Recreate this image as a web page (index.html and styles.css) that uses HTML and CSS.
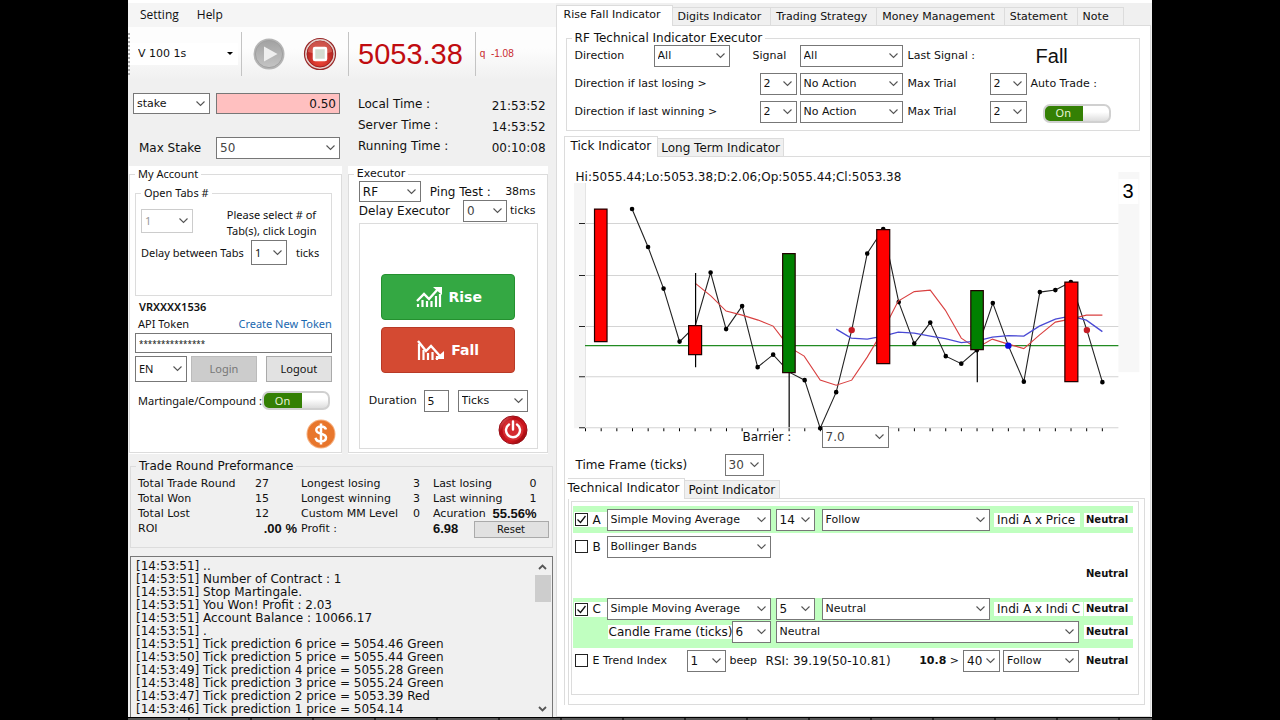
FILE: index.html
```html
<!DOCTYPE html>
<html lang="en">
<head>
<meta charset="utf-8">
<title>Trading Robot</title>
<link rel="stylesheet" href="styles.css">
</head>
<body>
<div class="screen">
<div class="app">
<section class="left">
  <nav class="menubar"><button>Setting</button><button>Help</button></nav>
  <div class="toolbar">
    <span class="grip"></span>
    <select class="market" aria-label="Market"><option>V 100 1s</option></select>
    <span class="sep"></span>
    <button class="round" aria-label="Start">
      <svg width="34" height="34" viewBox="0 0 34 34"><defs><linearGradient id="g1" x1="0" y1="0" x2="0" y2="1"><stop offset="0" stop-color="#a2a2a2"/><stop offset="1" stop-color="#c4c4c4"/></linearGradient></defs><circle cx="17" cy="17" r="15.5" fill="#b5b5b5"/><circle cx="17" cy="17" r="13.6" fill="url(#g1)" stroke="#a0a0a0"/><path d="M12 9.500 25.500 17 12 24.500z" fill="#eee"/></svg>
    </button>
    <button class="round" aria-label="Stop">
      <svg width="34" height="34" viewBox="0 0 34 34"><defs><radialGradient id="g2" cx=".5" cy=".75" r=".7"><stop offset="0" stop-color="#f04838"/><stop offset="1" stop-color="#a81c1c"/></radialGradient></defs><circle cx="17" cy="17" r="15.5" fill="#e4d0cc" stroke="#982828" stroke-width="1.200"/><circle cx="17" cy="17" r="13" fill="url(#g2)" stroke="#a02020"/><path d="M5 15a12 11 0 0 1 24 0q-12 4-24 0z" fill="#f08878" opacity=".5"/><rect x="11" y="11" width="12" height="12" rx="1" fill="#d4dcd0" stroke="#fff" stroke-width="2.500"/></svg>
    </button>
    <span class="sep"></span>
    <output class="price">5053.38</output>
    <span class="sep"></span>
    <output class="delta">q&nbsp; -1.08</output>
  </div>
  <div class="stakes">
    <div class="stake-form">
      <select aria-label="Stake type"><option>stake</option></select>
      <input class="pink" aria-label="Stake" value="0.50">
      <label for="max">Max Stake</label>
      <select id="max"><option>50</option></select>
    </div>
    <dl class="times">
      <dt>Local Time :</dt><dd>21:53:52</dd>
      <dt>Server Time :</dt><dd>14:53:52</dd>
      <dt>Running Time :</dt><dd>00:10:08</dd>
    </dl>
  </div>
  <div class="groups">
    <div class="white account">
      <fieldset>
        <legend>My Account</legend>
        <fieldset class="open-tabs">
          <legend>Open Tabs #</legend>
          <div class="tabs-pick">
            <select disabled aria-label="Open tabs"><option>1</option></select>
            <p>Please select # of Tab(s), click Login</p>
          </div>
          <div class="delay-tabs"><label for="dbt">Delay between Tabs</label><select id="dbt"><option>1</option></select><span>ticks</span></div>
        </fieldset>
        <div class="user">VRXXXX1536</div>
        <div class="token-head"><label for="token">API Token</label><a href="#">Create New Token</a></div>
        <input id="token" type="text" value="***************">
        <div class="login-row"><select aria-label="Language"><option>EN</option></select><button disabled>Login</button><button>Logout</button></div>
        <div class="mart"><span id="mc">Martingale/Compound :</span><button class="toggle" role="switch" aria-checked="true" aria-labelledby="mc"><span>On</span></button></div>
        <button class="round coin" aria-label="Money">
          <svg width="30" height="30" viewBox="0 0 30 30"><circle cx="15" cy="15" r="14.500" fill="#f5b080"/><circle cx="15" cy="15" r="13.500" fill="#e8762c"/><path d="M20 10.500c-.6-2.200-2.500-3-5-3-2.800 0-4.700 1.300-4.700 3.500 0 5 9.700 2.600 9.700 7.600 0 2.500-2.200 3.900-5 3.900-3 0-5-1.300-5.400-3.800M15 4.500v21" fill="none" stroke="#fff" stroke-width="2.500"/></svg>
        </button>
      </fieldset>
    </div>
    <div class="white executor">
      <fieldset>
        <legend>Executor</legend>
        <div class="ex-row"><select aria-label="Executor"><option>RF</option></select><span>Ping Test :</span><output>38ms</output></div>
        <div class="ex-delay"><label for="dex">Delay Executor</label><select id="dex"><option>0</option></select><span>ticks</span></div>
        <div class="trade">
          <button class="big rise"><svg width="28" height="22" viewBox="0 0 28 22"><path d="M2 15 9 8l5 5 9-10" fill="none" stroke="#fff" stroke-width="2.400"/><path d="M18 1h9v8z" fill="#fff"/><path d="M3 21v-3M7.500 21v-7M12 21v-6M16.500 21v-6M21 21V10M25 21V8" stroke="#fff" stroke-width="2.200"/></svg>Rise</button>
          <button class="big fall"><svg width="28" height="22" viewBox="0 0 28 22"><path d="M1 2 9 12l5-5 9 10" fill="none" stroke="#fff" stroke-width="2.400"/><path d="M27 12v8h-9z" fill="#fff"/><path d="M2 21V5M6.500 21V11M11 21v-7M15.500 21v-8M20 21v-4" stroke="#fff" stroke-width="2.200"/></svg>Fall</button>
          <div class="duration"><label for="dur">Duration</label><input id="dur" value="5"><select aria-label="Duration unit"><option>Ticks</option></select></div>
          <button class="round power" aria-label="Power">
            <svg width="30" height="30" viewBox="0 0 30 30"><defs><linearGradient id="g3" x1="0" y1="0" x2="1" y2="1"><stop offset="0" stop-color="#e88"/><stop offset=".3" stop-color="#b80c14"/><stop offset=".65" stop-color="#d01820"/><stop offset="1" stop-color="#700"/></linearGradient></defs><circle cx="15" cy="15" r="14" fill="url(#g3)" stroke="#981018"/><circle cx="15" cy="15" r="10.500" fill="#d42c30"/><path d="M11 9.500a7 7 0 1 0 8 0M15 6.500v8" fill="none" stroke="#fff" stroke-width="2.400" stroke-linecap="round"/></svg>
          </button>
        </div>
      </fieldset>
    </div>
  </div>
  <fieldset class="perf">
    <legend>Trade Round Preformance</legend>
    <div class="stats">
      <span>Total Trade Round</span><span>27</span><span>Longest losing</span><span class="r">3</span><div class="pair"><span>Last losing</span><span>0</span></div>
      <span>Total Won</span><span>15</span><span>Longest winning</span><span class="r">3</span><div class="pair"><span>Last winning</span><span>1</span></div>
      <span>Total Lost</span><span>12</span><span>Custom MM Level</span><span class="r">0</span><div class="pair"><span>Acuration</span><b>55.56%</b></div>
      <span>ROI</span><b class="r">.00 %</b><span>Profit :</span><span></span><div class="profit"><b>6.98</b><button>Reset</button></div>
    </div>
  </fieldset>
  <div class="log">
    <div class="lines">[14:53:51] ..
[14:53:51] Number of Contract : 1
[14:53:51] Stop Martingale.
[14:53:51] You Won! Profit : 2.03
[14:53:51] Account Balance : 10066.17
[14:53:51] .
[14:53:51] Tick prediction 6 price = 5054.46 Green
[14:53:50] Tick prediction 5 price = 5055.44 Green
[14:53:49] Tick prediction 4 price = 5055.28 Green
[14:53:48] Tick prediction 3 price = 5055.24 Green
[14:53:47] Tick prediction 2 price = 5053.39 Red
[14:53:46] Tick prediction 1 price = 5054.14</div>
    <div class="scroll">
      <svg width="9" height="6" viewBox="0 0 9 6"><path d="M1 5l3.500-3.500L8 5" fill="none" stroke="#555" stroke-width="1.800"/></svg>
      <span class="thumb"></span>
      <svg width="9" height="6" viewBox="0 0 9 6"><path d="M1 1l3.500 3.500L8 1" fill="none" stroke="#555" stroke-width="1.800"/></svg>
    </div>
  </div>
</section>

<section class="right">
  <div class="tabs main-tabs" role="tablist"><button class="on" role="tab">Rise Fall Indicator</button><button role="tab">Digits Indicator</button><button role="tab">Trading Strategy</button><button role="tab">Money Management</button><button role="tab">Statement</button><button role="tab">Note</button></div>
  <div class="page">
    <fieldset class="rf">
      <legend>RF Technical Indicator Executor</legend>
      <div class="rf-grid">
        <label for="dir">Direction</label><select id="dir" class="dir"><option>All</option></select><label for="sig" class="two">Signal</label><select id="sig"><option>All</option></select><span class="two">Last Signal :</span><output class="signal">Fall</output>
        <label for="l1" class="three">Direction if last losing &gt;</label><select id="l1"><option>2</option></select><select aria-label="Losing action"><option>No Action</option></select><label for="m1">Max Trial</label><select id="m1"><option>2</option></select><span id="at">Auto Trade :</span>
        <label for="l2" class="three">Direction if last winning &gt;</label><select id="l2"><option>2</option></select><select aria-label="Winning action"><option>No Action</option></select><label for="m2">Max Trial</label><select id="m2"><option>2</option></select><button class="toggle" role="switch" aria-checked="true" aria-labelledby="at"><span>On</span></button>
      </div>
    </fieldset>
    <div class="tabs sub-tabs" role="tablist"><button class="on" role="tab">Tick Indicator</button><button role="tab">Long Term Indicator</button></div>
    <div class="subpage">
      <div class="ohlc">Hi:5055.44;Lo:5053.38;D:2.06;Op:5055.44;Cl:5053.38</div>
      <svg class="chart" viewBox="574 172 567 260" role="img" aria-label="Tick chart">
        <rect x="574" y="183" width="11" height="245" fill="#f5f5f5"/>
        <rect x="1118" y="172" width="21" height="200" fill="#f7f7f7"/><rect x="1118" y="179" width="20" height="25" fill="#fff"/>
        <text x="1122" y="198" class="count">3</text>
        <path d="M585 223.500h533M585 275.500h533M585 326.500h533M585 376.500h533M585 427.500h533" stroke="#d4d4d4"/>
        <path d="M579 223.500h6M579 275.500h6M579 326.500h6M579 376.500h6M579 427.500h6" stroke="#222"/>
        <path d="M585.500 183v245" stroke="#e4e4e4"/>
        <path d="M585 429.500h518" stroke="#000" stroke-width="3" stroke-dasharray="1 14.650"/>
        <path d="M585 345.500h533" stroke="#228b22" stroke-width="1.300"/>
        <path d="M632 209 648 247 663.500 288.500 679.500 341.500 695 326 710.500 272.500 726 329 742 306 757.500 367 773 354.500 789 372 804.500 380 820 428 836 392 851.500 330 867 253.500 883 229 898.500 302 914 343.500 930 322.500 945.500 356 961 363.500 976.500 350 992.500 303 1008 345.500 1023.500 381.500 1039.500 292 1055 290 1070.500 282 1086.500 330 1102 382" fill="none" stroke="#222" stroke-width="1.100"/>
        <path d="M632 209h0M648 247h0M663.500 288.500h0M679.500 341.500h0M710.500 272.500h0M726 329h0M742 306h0M757.500 367h0M773 354.500h0M804.500 380h0M820 428h0M836 392h0M867 253.500h0M883 229h0M898.500 302h0M914 343.500h0M930 322.500h0M945.500 356h0M961 363.500h0M976.500 350h0M992.500 303h0M1023.500 381.500h0M1039.500 292h0M1055 290h0M1070.500 282h0M1102 382h0" stroke="#000" stroke-width="4.600" stroke-linecap="round"/>
        <path d="M695 283 711 296 726 311 742 315 758 320 773 326 789 347 804 356 820 380 836 385 851.500 380 867 357 883 330 898 301 914 291.500 930 290 945 310 961 338 976 348 992 339 1008 344 1023.500 348.500 1039 335 1055 322 1070 319 1086 315 1102 315" fill="none" stroke="#d94040" stroke-width="1.100"/>
        <path d="M836 329 851 338 867 339 883 336 898 332 914 333 930 336 945 338.500 961 342.500 976 341 992 337 1008 335.500 1023.500 336 1039 326 1055 319 1070 316 1086 320 1102 331.500" fill="none" stroke="#4a4ad4" stroke-width="1.300"/>
        <path d="M695.500 273v94M789 372v55M977 349v33" stroke="#000" stroke-width="1.200"/>
        <g stroke="#200" stroke-width="1.200"><path d="M594.500 209h12.500v132.500h-12.500zM688.500 325.500h13v29h-13zM876.500 229.500h13v134h-13zM1064.500 282h13v99.500h-13z" fill="#f00"/><path d="M782.500 253.500h12.500v119h-12.500zM970.500 290.500h12.500v59h-12.500z" fill="#008000"/></g>
        <circle cx="851.500" cy="330" r="3.200" fill="#c41c24"/><circle cx="1086.500" cy="330" r="3.200" fill="#c41c24"/><circle cx="1008" cy="345.500" r="3.200" fill="#0c0ce0"/>
      </svg>
      <div class="barrier"><label for="bar">Barrier :</label><select id="bar"><option>7.0</option></select></div>
      <div class="frame"><label for="tf">Time Frame (ticks)</label><select id="tf"><option>30</option></select></div>
      <div class="tabs tech-tabs" role="tablist"><button class="on" role="tab">Technical Indicator</button><button role="tab">Point Indicator</button></div>
      <div class="techpage">
        <div class="inner">
          <div class="band row">
            <label class="chk"><input type="checkbox" checked>A</label>
            <select aria-label="Indicator A" class="ind"><option>Simple Moving Average</option></select>
            <select aria-label="Period A" class="num"><option>14</option></select>
            <select aria-label="Action A" class="act"><option>Follow</option></select>
            <span class="note">Indi A x Price</span><b class="res">Neutral</b>
          </div>
          <div class="row plain">
            <label class="chk"><input type="checkbox">B</label>
            <select aria-label="Indicator B" class="ind"><option>Bollinger Bands</option></select>
          </div>
          <div class="row lone"><b class="res">Neutral</b></div>
          <div class="band row c">
            <label class="chk"><input type="checkbox" checked>C</label>
            <select aria-label="Indicator C" class="ind"><option>Simple Moving Average</option></select>
            <select aria-label="Period C" class="num"><option>5</option></select>
            <select aria-label="Action C" class="act"><option>Neutral</option></select>
            <span class="note">Indi A x Indi C</span><b class="res">Neutral</b>
          </div>
          <div class="band row d">
            <label class="candle" for="cf">Candle Frame (ticks)</label><select id="cf" class="num"><option>6</option></select>
            <select aria-label="Candle action" class="wide"><option>Neutral</option></select><b class="res">Neutral</b>
          </div>
          <div class="row e">
            <label class="chk"><input type="checkbox">E Trend Index</label>
            <select aria-label="Trend index" class="num"><option>1</option></select>
            <span class="beep">beep</span><span class="rsi">RSI: 39.19(50-10.81)</span><span class="thr-label"><b>10.8</b> &gt;</span>
            <select aria-label="Threshold" class="thr"><option>40</option></select>
            <select aria-label="Trend action" class="fol"><option>Follow</option></select><b class="res">Neutral</b>
          </div>
        </div>
      </div>
    </div>
  </div>
</section>
</div>
<div class="taskbar"></div>
</div>
</body>
</html>
```
FILE: styles.css
```css
* { box-sizing: border-box; }
body { margin: 0; background: #000; color: #111; font: 11px/14px "DejaVu Sans", sans-serif; white-space: nowrap; }
.screen { height: 100vh; margin: 0 10%; display: flex; flex-direction: column; overflow: hidden; }
.app { flex: 1; min-height: 0; display: flex; background: #f0f0f0; border-top: 3px solid #fff; }
.taskbar { height: 3px; border-top: 1px solid #000; background: repeating-linear-gradient(90deg, #555 0 60px, #222 60px 62px); }

button, input, select { font: inherit; color: inherit; margin: 0; min-width: 0; }
button { padding: 0; border: 0; background: none; }
fieldset { margin: 0; padding: 0; border: 1px solid #dcdcdc; min-width: 0; }
legend { padding: 0 3px; margin-left: 6px; }
p, dl, dd { margin: 0; }
select, input { height: 22px; background: #fff; border: 1px solid #777; border-radius: 0; padding: 0 4px; }
select { appearance: none; padding: 0 14px 0 3px; background: #fff url("data:image/svg+xml,%3Csvg xmlns='http://www.w3.org/2000/svg' width='9' height='6'%3E%3Cpath d='M.5 .5l4 4 4-4' fill='none' stroke='%23555' stroke-width='1.100'/%3E%3C/svg%3E") no-repeat right 4px center; }
.round { display: flex; }

.left { flex: 428; min-width: 0; display: flex; flex-direction: column; }
.menubar { height: 24px; background: #f5f5f5; display: flex; align-items: center; gap: 18px; padding-left: 12px; font: 12px/16px "Open Sans", sans-serif; }
.toolbar { height: 53px; display: flex; align-items: center; background: linear-gradient(#fdfdfd 40%, #f0f0f0); }
.grip { width: 2px; height: 42px; background: repeating-linear-gradient(#aaa 0 2px, transparent 2px 4px); }
.market { width: 108px; height: 22px; border: 0; padding-left: 8px; background: #fff url("data:image/svg+xml,%3Csvg xmlns='http://www.w3.org/2000/svg' width='6' height='4'%3E%3Cpath d='M0 0h6l-3 3z'/%3E%3C/svg%3E") no-repeat right 5px center; }
.sep { width: 1px; height: 44px; margin: 0 9px 0 3px; background: #c4c4c4; }
.toolbar .round { margin: 0 8px 0 1px; }
.toolbar .round + .round { margin: 0 8px 0 9px; }
.price { font: 29px/34px "Liberation Sans", sans-serif; color: #c00c10; margin-right: 9px; }
.delta { font: 10px/12px "Liberation Sans", sans-serif; color: #c8282c; margin-left: -5px; }

.stakes { height: 86px; padding: 13px 10px 0 5px; display: flex; font-size: 12px; }
.stake-form { width: 207px; display: grid; grid-template-columns: 77px 1fr; grid-template-rows: 21px 22px; gap: 23px 6px; align-items: center; }
.stake-form select, .stake-form input { height: 100%; }
.stake-form select:first-child { font-size: 11px; }
.stake-form label { padding-left: 6px; }
.stake-form #max { color: #444; }
.pink { background: #ffc0c0; text-align: right; padding: 0 3px; }
.times { flex: 1; margin-left: 18px; display: grid; grid-template-columns: 1fr auto; grid-auto-rows: 21px; padding-top: 1px; }
.times dt { line-height: 20px; }
.times dd { line-height: 24px; }

.groups { display: flex; gap: 6px; padding: 0 8px 0 1px; }
.white { background: #fff; padding: 1px 0 0; height: 288px; }
.white > fieldset { height: 286px; }
.account { flex: 211; font: 11px/14px "Noto Sans", sans-serif; }
.account legend { margin-left: 0; }
.account > fieldset { padding: 5px 9px 0 5px; }
.open-tabs { height: 110px; padding: 7px 5px; }
.tabs-pick { display: flex; justify-content: space-between; }
.tabs-pick select { width: 52px; height: 24px; margin-top: 2px; border-color: #ccc; color: #999; opacity: 1; }
.tabs-pick p { width: 99px; white-space: normal; line-height: 16px; }
.delay-tabs { display: flex; align-items: center; margin-top: 1px; }
.delay-tabs label { width: 110px; }
.delay-tabs select { width: 36px; height: 25px; margin-right: 9px; }
.user { font-weight: 600; margin: 4px 4px 0; }
.token-head { display: flex; justify-content: space-between; padding: 3px 0 0 3px; height: 19px; }
.token-head a { color: #1a68b0; text-decoration: none; }
#token { display: block; width: 100%; height: 20px; font-size: 8px; padding: 0 3px; }
.login-row { display: flex; margin-top: 3px; }
.login-row select { width: 52px; height: 26px; }
.login-row button { width: 66px; height: 26px; border: 1px solid #aaa; background: #e2e2e2; margin-left: auto; }
.login-row button:disabled { background: #ccc; color: #777; border-color: #bbb; margin-left: 4px; }
.mart { display: flex; align-items: center; justify-content: space-between; padding: 0 2px 0 3px; margin-top: 9px; }
.toggle { width: 68px; height: 19px; border: 2px solid #d0d0d0; border-radius: 7px; background: linear-gradient(90deg, #348004 0 60%, transparent 60%), linear-gradient(#fff 40%, #ddd); color: #e8f4d8; text-align: left; font: 11px/14px "Noto Sans", sans-serif; }
.toggle span { padding-left: 11px; }
.coin { margin: 9px -4px 0 auto; }

.executor { flex: 202; font-size: 12px; }
.executor > fieldset { padding: 0 9px 0 10px; }
.executor legend { margin-left: -5px; font-size: 11px; }
.ex-row { display: flex; align-items: center; }
.ex-row select { width: 62px; height: 21px; margin-right: 9px; }
.ex-row output { margin-left: auto; font-size: 11px; padding-right: 2px; }
.ex-delay { display: flex; align-items: center; margin-top: -2px; }
.ex-delay select { width: 44px; margin: 0 3px 0 auto; color: #444; }
.ex-delay span { padding-right: 2px; font-size: 11px; }
.trade { border: 1px solid #dcdcdc; height: 226px; margin-top: 1px; padding: 50px 9px 0; font-size: 11px; }
.big { display: flex; align-items: center; justify-content: center; gap: 6px; width: 134px; height: 46px; margin: 0 auto 7px; border-radius: 4px; color: #fff; font: bold 14px/20px "DejaVu Sans", sans-serif; }
.rise { background: #34a843; border: 1px solid #24902f; }
.fall { background: #d44a32; border: 1px solid #b83a26; }
.duration { display: flex; align-items: center; margin-top: 17px; }
#dur { width: 25px; margin-left: auto; padding: 0 3px; }
.duration select { width: 70px; margin-left: 9px; }
.power { margin: 3px 0 0 auto; }

.perf { margin: 5px 3px 0 2px; height: 89px; }
.perf legend { margin-left: 5px; font-size: 12px; }
.stats { display: grid; grid-template-columns: 117px 42px 106px 17px 1fr; grid-auto-rows: 15px; line-height: 15px; padding: 3px 3px 0 7px; }
.stats > :nth-child(5n+3) { padding-left: 4px; }
.stats > :nth-child(5n+5) { padding-left: 13px; display: flex; justify-content: space-between; }
.r { text-align: right; }
.pair { padding-right: 12px; }
.stats b { font: bold 13px/15px "Liberation Sans", sans-serif; }
.profit button { width: 75px; height: 17px; border: 1px solid #aaa; background: #e1e1e1; font-size: 10px; line-height: 15px; }

.log { flex: 1; min-height: 0; overflow: hidden; display: flex; margin: 8px 3px 0 2px; border: 1px solid #777; border-bottom: 0; }
.lines { flex: 1; white-space: pre; line-height: 13px; padding: 3px 5px; font-size: 12px; }
.scroll { width: 18px; display: flex; flex-direction: column; align-items: center; padding: 7px 1px 5px; }
.thumb { width: 16px; height: 27px; margin: 5px 0 auto; background: #cdcdcd; }

.right { flex: 596; min-width: 0; display: flex; flex-direction: column; padding: 2px 1px 0 0; }
.tabs { display: flex; align-items: flex-end; }
.tabs button { height: 18px; border: 1px solid #dcdcdc; border-width: 1px 1px 0 0; background: #f0f0f0; padding: 0 4px; }
.tabs .on { height: 21px; background: #fff; border-left-width: 1px; align-self: stretch; position: relative; margin-bottom: -1px; padding-bottom: 1px; }
.main-tabs button { padding: 0 9px 0 5px; }
.main-tabs .on { padding: 0 11px 2px 7px; }
.main-tabs button:last-child { padding-right: 14px; }
.page { flex: 1; min-height: 0; background: #fff; border: 1px solid #dcdcdc; padding: 5px 0 0 7px; }
.rf { margin: 0 10px 0 2px; height: 100px; }
.rf legend { margin-left: 5px; font-size: 12px; }
.rf-grid { display: grid; grid-template-columns: 79px 99px 7px 40px 108px 82px 41px 1fr; grid-template-rows: 22px 22px 22px; row-gap: 6px; align-items: center; padding-left: 8px; }
.rf-grid select { width: 37px; }
.rf-grid select + select, #sig { width: 103px; }
.rf-grid .dir { width: 76px; }
.two { grid-column: span 2; }
.three { grid-column: span 3; }
.signal { font: 20px/20px "Liberation Sans", sans-serif; padding-left: 5px; }
.rf-grid .toggle { margin: 2px 0 0 12px; }
.sub-tabs { margin-top: 5px; font-size: 12px; }
.sub-tabs .on { padding: 0 6px 2px; }
.sub-tabs button { padding: 0 3px; }
.subpage { border: 1px solid #dcdcdc; border-width: 1px 0 0 1px; padding: 13px 5px 0 3px; font-size: 12px; }
.ohlc { padding-left: 8px; }
.chart { display: block; width: 100%; height: auto; margin-top: -12px; padding-left: 6px; padding-right: 4px; }
.count { font: 20px "Liberation Sans", sans-serif; }
.barrier { display: flex; align-items: center; position: relative; margin: -6px 0 6px 175px; }
.barrier label { width: 79px; }
.barrier select { width: 67px; color: #444; }
.frame { display: flex; align-items: center; padding-left: 8px; }
.frame label { width: 149px; }
.frame select { width: 39px; color: #444; }
.tech-tabs { margin-top: 2px; }
.tech-tabs .on { padding: 0 4px 2px 0; border-left: 0; }
.techpage { border: 1px solid #dcdcdc; height: 207px; padding: 2px 5px 0 2px; }
.inner { border: 1px solid #dcdcdc; height: 194px; padding: 4px 5px 0 1px; }
.row { display: flex; align-items: center; height: 27px; padding-left: 1px; }
.band { background: #c0ffc0; }
.chk { display: flex; align-items: center; gap: 5px; width: 33px; height: 15px; background: #fff; padding-left: 1px; }
.chk input { appearance: none; width: 13px; height: 13px; padding: 0; border: 1px solid #222; }
.chk input:checked { background: #fff url("data:image/svg+xml,%3Csvg xmlns='http://www.w3.org/2000/svg' width='11' height='11'%3E%3Cpath d='M1.500 5.500l3 3 5-6.500' fill='none' stroke='%23111' stroke-width='1.300'/%3E%3C/svg%3E"); }
.ind { width: 164px; margin-right: 5px; font-size: 11px; }
.num { width: 39px; }
.act { flex: 1; margin: 0 4px 0 7px; font-size: 11px; }
.note { width: 86px; background: #fff; padding-left: 3px; margin-right: 4px; }
.res { width: 49px; background: #fff; padding-left: 2px; font-size: 10px; line-height: 14px; }
.lone { justify-content: flex-end; }
.c { height: 22px; margin-top: 11px; }
.c .note { width: 89px; margin-right: 1px; }
.d { height: 28px; padding-bottom: 4px; }
.candle { width: 124px; margin-left: 34px; background: #fff; padding-left: 1px; }
.wide { flex: 1; margin: 0 5px; font-size: 11px; }
.e { height: 25px; }
.e .chk { width: 113px; font-size: 11px; }
.beep { width: 40px; padding-left: 4px; font-size: 11px; }
.rsi { flex: 1; }
.thr-label { font-size: 11px; }
.thr { width: 37px; margin: 0 3px 0 4px; }
.fol { width: 76px; margin-right: 5px; font-size: 11px; }
```
